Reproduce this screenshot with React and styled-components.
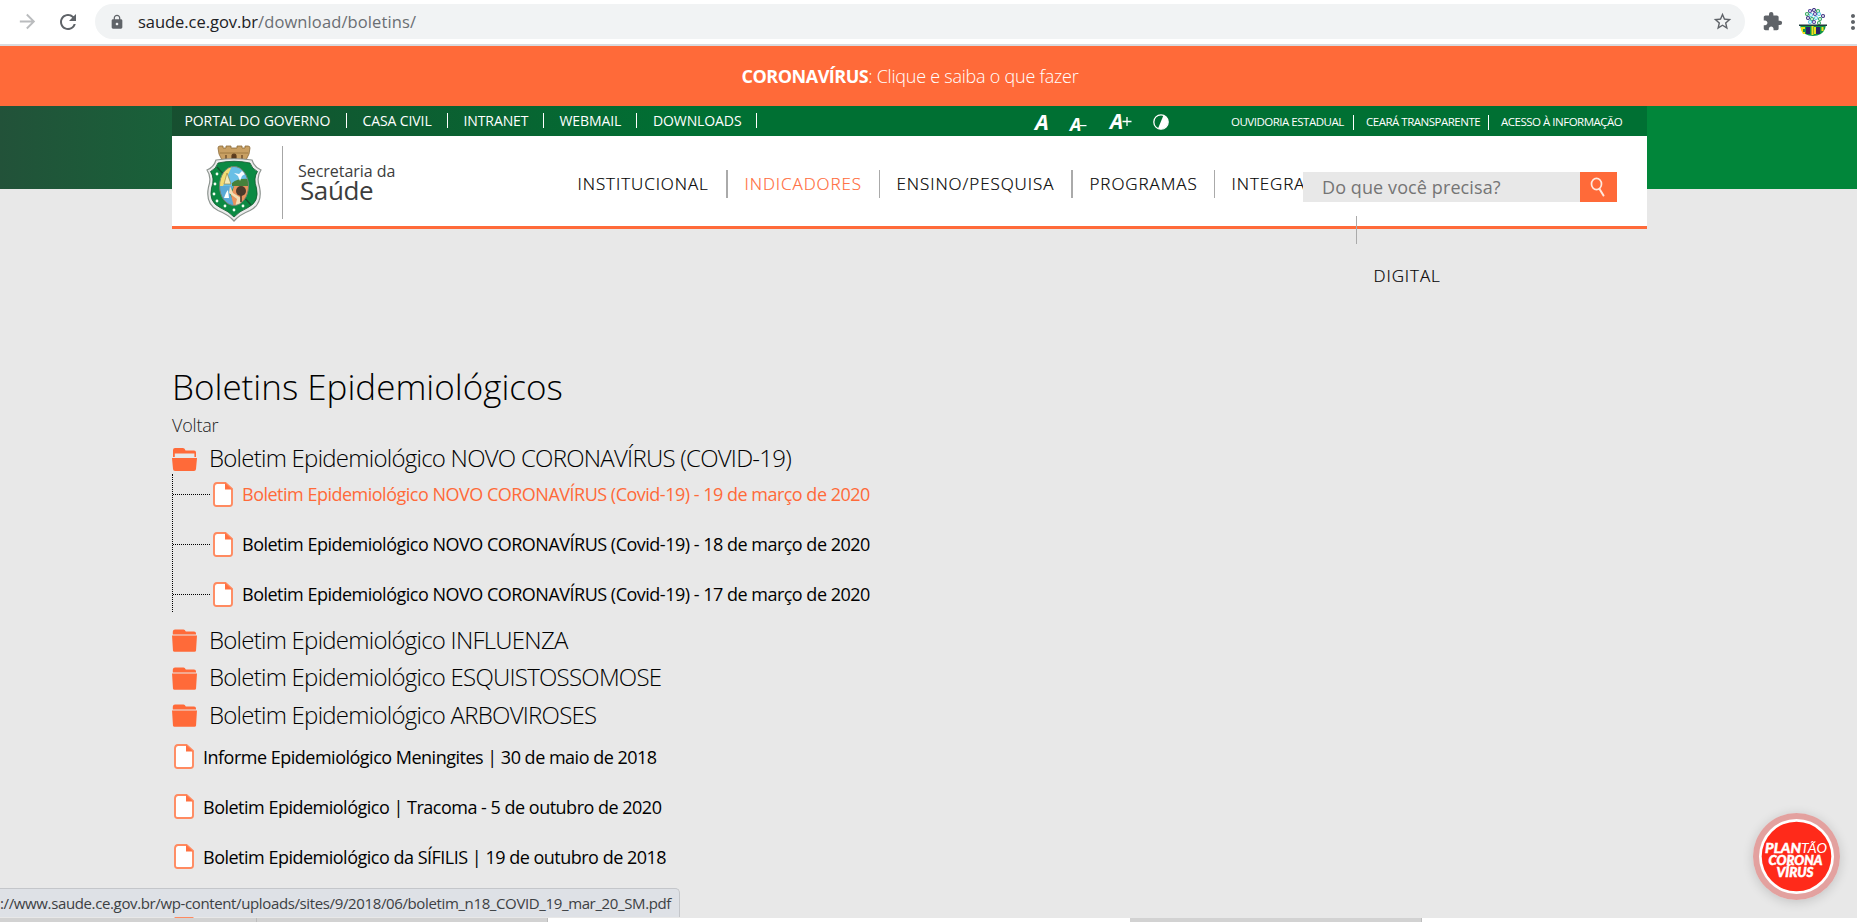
import React from 'react';
import styled, { createGlobalStyle, css } from 'styled-components';
import { MdArrowForward, MdRefresh, MdLock, MdStarBorder, MdExtension, MdMoreVert } from 'react-icons/md';

const ORANGE = '#ff6a39';

const GlobalStyle = createGlobalStyle`
  *, *::before, *::after { box-sizing: border-box; }
  body { margin: 0; background: #fff; font-family: "Open Sans", "Noto Sans", sans-serif; color: #000; }
  h1, h2, p, ul { margin: 0; padding: 0; }
  ul { list-style: none; }
  a { color: inherit; text-decoration: none; }
`;

const Screen = styled.div`
  width: 1857px;
  height: 922px;
  overflow: hidden;
  display: flex;
  flex-direction: column;
`;

/* ---- browser toolbar ---- */

const Toolbar = styled.header`
  flex: none;
  height: 46px;
  border-bottom: 2px solid #d9dbdf;
  display: flex;
  align-items: center;
  padding: 0 0 1px 16px;
  overflow: hidden;
`;

const ToolIcon = styled.span`
  flex: none;
  display: flex;
  color: ${(p) => p.$color || '#5f6368'};
  margin-left: ${(p) => p.$gap || 0}px;
  svg { display: block; }
`;

const AddressBar = styled.div`
  flex: none;
  width: 1650px;
  height: 35px;
  margin-left: 15px;
  padding: 0 12px 0 14px;
  border-radius: 18px;
  background: #f1f3f4;
  display: flex;
  align-items: center;
`;

const Url = styled.span`
  flex: 1;
  margin-left: 13px;
  font-size: 16.5px;
  line-height: 34px;
  letter-spacing: -0.04px;
  color: #202124;
`;

const UrlPath = styled.span`
  color: #6a6e73;
  letter-spacing: 0.11px;
`;

/* ---- page ---- */

const Page = styled.div`
  position: relative;
  flex: none;
  height: 872px;
  overflow: hidden;
  background: #e8e8e8;
`;

const Alert = styled.div`
  height: 60px;
  background: ${ORANGE};
  color: #fff;
  padding-right: 37px;
  text-align: center;
  font-size: 18px;
  font-weight: 300;
  line-height: 60px;
  letter-spacing: -0.24px;
  strong { font-weight: 700; letter-spacing: -0.5px; }
`;

const Masthead = styled.div`
  height: 83px;
  padding: 0 210px 0 172px;
  background: linear-gradient(90deg, #225239 0, #01863a 600px);
`;

const TopBar = styled.div`
  height: 30px;
  display: flex;
  align-items: flex-start;
  background: linear-gradient(90deg, #174f30 0, #007033 520px);
  color: #fff;
`;

const TopLinks = styled.ul`
  display: flex;
  padding-top: 7px;
  width: 863px;
`;

const TopLink = styled.li`
  width: ${(p) => p.$w}px;
  padding-left: ${(p) => p.$pl || 15.5}px;
  height: 15px;
  border-right: 1px solid #fff;
  font-size: 14px;
  line-height: 15px;
  letter-spacing: -0.1px;
  white-space: nowrap;
`;

const FontTools = styled.div`
  display: flex;
  align-items: flex-end;
  width: 196px;
  height: 25px;
  font-weight: 700;
  font-style: italic;
`;

const FontTool = styled.span`
  display: flex;
  width: ${(p) => p.$w}px;
  font-size: ${(p) => p.$size}px;
  line-height: 17px;
  height: ${(p) => p.$h}px;
`;

const Sign = styled.svg`
  margin: ${(p) => p.$top}px 0 0 -1px;
`;

const SideLinks = styled.ul`
  display: flex;
  padding-top: 9px;
`;

const SideLink = styled.li`
  width: ${(p) => p.$w}px;
  padding-left: ${(p) => (p.$first ? 0 : 12)}px;
  height: 15px;
  border-right: ${(p) => (p.$last ? 'none' : '1px solid #fff')};
  font-size: 11.5px;
  line-height: 14px;
  letter-spacing: -0.49px;
  white-space: nowrap;
`;

const Header = styled.div`
  position: relative;
  height: 93px;
  background: #fff;
  border-bottom: 3px solid ${ORANGE};
  display: flex;
  align-items: flex-start;
`;

const Brand = styled.div`
  display: flex;
  align-items: flex-start;
  width: 389px;
  padding: 9px 0 0 34px;
`;

const BrandName = styled.div`
  margin: 1px 0 0 20px;
  padding: 17px 0 0 15px;
  height: 73px;
  border-left: 1px solid #a6a6a6;
  color: #3d3d3d;
  span { display: block; font-size: 16px; line-height: 17px; letter-spacing: -0.03px; }
  strong { display: block; font-size: 26px; font-weight: 400; line-height: 20px; padding-left: 2px; letter-spacing: -0.4px; }
`;

const Nav = styled.ul`
  display: flex;
  align-items: flex-start;
  padding-top: 34px;
`;

const NavItem = styled.li`
  flex: none;
  width: ${(p) => p.$w}px;
  height: 28px;
  margin-top: ${(p) => p.$drop || 0}px;
  padding-left: 16.5px;
  border-right: ${(p) => (p.$rule ? `${p.$rule}px solid #aaa` : 'none')};
  font-size: 17px;
  font-weight: 300;
  line-height: 28px;
  letter-spacing: 0.93px;
  -webkit-text-stroke: 0.2px currentColor;
  color: ${(p) => (p.$active ? ORANGE : '#000')};
  white-space: nowrap;
`;

const NavLabel = styled.span`
  display: inline-block;
  ${(p) => p.$raised && css`margin-top: -46px; vertical-align: top;`}
`;

const Search = styled.form`
  position: absolute;
  left: 1131px;
  top: 36px;
  display: flex;
  width: 314px;
  height: 30px;
`;

const SearchField = styled.div`
  flex: 1;
  background: #e8e8e8;
  color: #757575;
  padding-left: 19px;
  font-size: 18px;
  line-height: 30px;
  letter-spacing: 0.1px;
`;

const SearchButton = styled.div`
  width: 37px;
  padding-right: 2px;
  background: ${ORANGE};
  display: flex;
  align-items: center;
  justify-content: center;
`;

const Content = styled.main`
  padding: 173px 210px 0 172px;
`;

const Title = styled.h1`
  font-size: 35px;
  font-weight: 300;
  line-height: 50px;
  letter-spacing: 0;
`;

const Back = styled.p`
  font-size: 18px;
  font-weight: 300;
  line-height: 27px;
  letter-spacing: -0.2px;
  color: #222;
`;

const FolderRow = styled.h2`
  display: flex;
  align-items: center;
  gap: 12px;
  height: ${(p) => (p.$open ? 30 : 37.5)}px;
  margin-top: ${(p) => (p.$open ? 5 : 0)}px;
  font-size: 24px;
  font-weight: 300;
  letter-spacing: -0.75px;
  white-space: nowrap;
`;

const FolderName = styled.span`
  padding-bottom: 3px;
`;

const Children = styled.ul`
  height: 138px;
  margin-bottom: 10px;
  padding-top: 1px;
  border-left: 1px dotted #000;
  display: flex;
  flex-direction: column;
  gap: 12px;
`;

const FileRow = styled.li`
  flex: none;
  display: flex;
  align-items: center;
  height: ${(p) => (p.$nested ? 38 : 44)}px;
  color: ${(p) => (p.$active ? ORANGE : '#000')};
  font-size: 18px;
  letter-spacing: -0.5px;
  white-space: nowrap;
  svg { margin: 0 9px 0 ${(p) => (p.$nested ? 3 : 2)}px; }
`;

const Branch = styled.span`
  width: 37px;
  border-top: 1px dotted #000;
`;

const Files = styled.ul`
  display: flex;
  flex-direction: column;
  gap: 6px;
`;

const StatusBar = styled.div`
  position: absolute;
  left: 0;
  bottom: 1px;
  width: 680px;
  height: 29px;
  padding-right: 10px;
  border: 1px solid #c4c6ca;
  border-width: 1px 1px 0 0;
  border-radius: 0 5px 0 0;
  background: #dee1e6;
  color: #3c4043;
  font-size: 15px;
  line-height: 28px;
  letter-spacing: -0.37px;
  text-align: right;
  white-space: nowrap;
`;

const HotlineBadge = styled.div`
  position: absolute;
  left: 1753px;
  top: 767px;
  width: 87px;
  height: 87px;
  border-radius: 50%;
  box-shadow: 0 2px 12px rgba(0, 0, 0, 0.16);
  svg { display: block; }
`;

const Taskbar = styled.div`
  flex: none;
  height: 4px;
  display: flex;
  background: #fff;
`;

const Task = styled.span`
  width: ${(p) => p.$w}px;
  margin-left: ${(p) => p.$gap || 0}px;
  background: #d2d2d2;
  border-right: 1px solid #bdbdbd;
`;

/* ---- drawings ---- */

const Crest = () => (
  <svg width="56" height="77" viewBox="0 0 56 77">
    <path d="M12 3q0-2 2-2h3v2h3V1h5v2h6V1h5v2h3V1h3q2 0 2 2l-1 6-3 6H16l-3-6z" fill="#c9a063" stroke="#8a6a38" strokeWidth=".8" />
    <path d="M14 8h28" stroke="#9a7740" strokeWidth=".9" />
    <path d="M20 14v-4M36 14v-4M26 14v-3a2 2 0 0 1 4 0v3" fill="#5b3b1e" stroke="#5b3b1e" strokeWidth="1.200" />
    <path d="M10 15Q28 12.500 46 15Q48 22 55 25Q50 32 53.500 42Q57 59 44 65.500Q33 70 28 76Q23 70 12 65.500Q-1 59 2.500 42Q6 32 1 25Q8 22 10 15z" fill="#ececec" stroke="#8d9490" strokeWidth="1.200" />
    <path d="M12 18Q28 14.500 44 18Q46 24 51.500 26.500Q47 33 50.500 43Q53.500 57 42 62.500Q33 66.500 28 72Q23 66.500 14 62.500Q2.500 57 5.500 43Q9 33 4.500 26.500Q10 24 12 18z" fill="#0b8a43" stroke="#10592f" strokeWidth=".8" />
    <path d="M11 22l34 38" stroke="#14532f" strokeWidth="1.400" />
    <clipPath id="oval"><ellipse cx="28" cy="41" rx="14.500" ry="19.500" /></clipPath>
    <g clipPath="url(#oval)">
      <rect x="13" y="21" width="30" height="20" fill="#68bfe6" />
      <path d="M13 21h13L17 41h-4z" fill="#f4dc73" />
      <path d="M26 38q6-5 17-4v7H26z" fill="#46813b" />
      <path d="M13 41h15l-4 8 6 12H13z" fill="#5aa9d6" />
      <path d="M28 41h15v21H28l-3-12z" fill="#e9935c" />
      <path d="M24 41l-1 7 8 6-2 8h5l1-9-8-5z" fill="#f2deb5" />
      <path d="M21 28l-3 11h7z" fill="#f3eaba" stroke="#927b32" strokeWidth=".6" />
      <path d="M28 28l5 1 3-3 3 3-3 2-2 5-2-5z" fill="#f6fbff" />
      <path d="M18 53q2-6 4-8l1 8z" fill="#fff" />
      <circle cx="35" cy="46" r="5" fill="#4c3a2b" />
      <path d="M35 48v9" stroke="#4c3a2b" strokeWidth="1.600" />
    </g>
    <ellipse cx="28" cy="41" rx="14.500" ry="19.500" fill="none" stroke="#75806f" strokeWidth="1" />
    <g fill="#f1fff2">
      {[[11, 29], [9, 39], [8, 49], [11, 56], [19, 61], [28, 65], [37, 61]].map(([x, y]) => (
        <circle key={`${x}-${y}`} cx={x} cy={y} r="1.400" />
      ))}
    </g>
  </svg>
);

const OpenFolder = () => (
  <svg width="25" height="23" viewBox="0 0 25 23">
    <path d="M1 9V2q0-2 2-2h8q2 0 2.500 2.500H22q2 0 2 2V9h-1.600V5.500H2.800V9z" fill={ORANGE} />
    <path d="M0 10h25l-1 11q-.2 2-2 2H3q-1.800 0-2-2z" fill={ORANGE} />
  </svg>
);

const ClosedFolder = () => (
  <svg width="25" height="23" viewBox="0 0 25 23">
    <path d="M.8 5.500V2.500Q1 .5 3 .5h8.500q1.500 0 2.300 2H22q2 0 2 2v1z" fill={ORANGE} />
    <path d="M0 6.500h25l-1 15q-.1 1.300-1.500 1.300h-20q-1.400 0-1.500-1.300z" fill={ORANGE} />
  </svg>
);

const FileIcon = () => (
  <svg width="20" height="25" viewBox="0 0 20 25">
    <path d="M4 1h8.500L19 7v14.500q0 2.500-2.500 2.500h-13Q1 24 1 21.500v-17Q1 1 4 1z" fill="#fff" stroke="#ff8a60" strokeWidth="1.900" />
    <path d="M12 1l7 6.500h-7z" fill="#ff7040" />
  </svg>
);

const Contrast = () => (
  <svg width="16" height="16" viewBox="0 0 16 16">
    <circle cx="8" cy="8" r="7.200" fill="none" stroke="#fff" strokeWidth="1.300" />
    <path d="M10.500 1.200A7.200 7.200 0 1 1 5 14.600z" fill="#fff" />
  </svg>
);

const Minus = () => (
  <Sign $top={9} width="7" height="2" viewBox="0 0 7 2"><path d="M0 .6h6.500" stroke="#fff" strokeWidth="1.200" /></Sign>
);

const Plus = () => (
  <Sign $top={4} width="10" height="10" viewBox="0 0 10 10"><path d="M.5 4.500h9M5 0v9" stroke="#fff" strokeWidth="1.300" /></Sign>
);

const Magnifier = () => (
  <svg width="16" height="20" viewBox="0 0 16 20">
    <ellipse cx="6.500" cy="7" rx="5" ry="5.700" fill="none" stroke="#ffe9df" strokeWidth="1.700" />
    <path d="M9.500 12l4 6.500" stroke="#ffe9df" strokeWidth="2" strokeLinecap="round" />
  </svg>
);

const Avatar = () => (
  <svg width="28" height="28" viewBox="0 0 28 28">
    {[
      [11, 3, '#4b3b97'], [15, 2, '#3a2f80'], [19, 3, '#2fa65a'], [8, 6, '#2fa65a'], [12, 7, '#59c8e0'],
      [16, 6, '#4b3b97'], [20, 6, '#59c8e0'], [24, 8, '#3a2f80'], [9, 10, '#3a2f80'], [13, 11, '#2fa65a'],
      [17, 10, '#59c8e0'], [21, 11, '#2fa65a'], [11, 14, '#59c8e0'], [15, 14, '#4b3b97'], [20, 15, '#2fa65a'],
    ].map(([x, y, c]) => (
      <circle key={`${x}-${y}`} cx={x} cy={y} r="1.500" fill="#fff" stroke={c} strokeWidth="1.100" />
    ))}
    <path d="M1 17h26l-1 4q-3 7-12 7T2 21z" fill="#129447" />
    <path d="M0 16.500h28v1.500H0z" fill="#1c3b3a" />
    <path d="M7 19h4v7H7zM17 19h4v7h-4z" fill="#2b2369" />
    <path d="M2 19h4v2H4v3h2v2H4l-2-4zM12.500 18h2v9h-2zM15 19h2v7h-2zM22.500 19h2v4h-2z" fill="#f2df1d" />
  </svg>
);

const Hotline = () => (
  <svg width="87" height="87" viewBox="0 0 87 87">
    <circle cx="43.500" cy="43.500" r="43.500" fill="#e3a19f" />
    <circle cx="43.500" cy="43.500" r="37.500" fill="#fff" />
    <circle cx="43.500" cy="43.500" r="34.800" fill="#ff2a1a" />
    <g fill="#fff" fontFamily="Lato, sans-serif" fontStyle="italic" fontWeight="900" fontSize="14">
      <text x="12" y="40" textLength="36" lengthAdjust="spacingAndGlyphs" stroke="#fff" strokeWidth=".4">PLAN</text>
      <text x="48" y="40" textLength="26" lengthAdjust="spacingAndGlyphs" fontWeight="400">TÃO</text>
      <text x="15.500" y="51.500" textLength="54" lengthAdjust="spacingAndGlyphs" stroke="#fff" strokeWidth=".5">CORONA</text>
      <text x="23.500" y="63.500" textLength="37" lengthAdjust="spacingAndGlyphs" stroke="#fff" strokeWidth=".5">VÍRUS</text>
    </g>
  </svg>
);

const nested = [
  'Boletim Epidemiológico NOVO CORONAVÍRUS (Covid-19) - 19 de março de 2020',
  'Boletim Epidemiológico NOVO CORONAVÍRUS (Covid-19) - 18 de março de 2020',
  'Boletim Epidemiológico NOVO CORONAVÍRUS (Covid-19) - 17 de março de 2020',
];
const folders = ['INFLUENZA', 'ESQUISTOSSOMOSE', 'ARBOVIROSES'];
const files = [
  'Informe Epidemiológico Meningites | 30 de maio de 2018',
  'Boletim Epidemiológico | Tracoma - 5 de outubro de 2020',
  'Boletim Epidemiológico da SÍFILIS | 19 de outubro de 2018',
];

export default function App() {
  return (
    <Screen>
      <GlobalStyle />
      <Toolbar>
        <ToolIcon $color="#babcbe"><MdArrowForward size={23} /></ToolIcon>
        <ToolIcon $gap={17}><MdRefresh size={24} /></ToolIcon>
        <AddressBar>
          <ToolIcon><MdLock size={16} /></ToolIcon>
          <Url>saude.ce.gov.br<UrlPath>/download/boletins/</UrlPath></Url>
          <ToolIcon><MdStarBorder size={21} /></ToolIcon>
        </AddressBar>
        <ToolIcon $gap={17}><MdExtension size={21} /></ToolIcon>
        <ToolIcon $gap={16}><Avatar /></ToolIcon>
        <ToolIcon $gap={14}><MdMoreVert size={24} /></ToolIcon>
      </Toolbar>

      <Page>
        <Alert><strong>CORONAVÍRUS</strong>: Clique e saiba o que fazer</Alert>
        <Masthead>
          <TopBar>
            <TopLinks>
              <TopLink $w={175} $pl={12.5}>PORTAL DO GOVERNO</TopLink>
              <TopLink $w={101}>CASA CIVIL</TopLink>
              <TopLink $w={96}>INTRANET</TopLink>
              <TopLink $w={93}>WEBMAIL</TopLink>
              <TopLink $w={120} $pl={16}>DOWNLOADS</TopLink>
            </TopLinks>
            <FontTools>
              <FontTool $w={35} $size={22} $h={18}>A</FontTool>
              <FontTool $w={40} $size={18} $h={15}>A<Minus /></FontTool>
              <FontTool $w={43} $size={21} $h={18}>A<Plus /></FontTool>
              <FontTool $w={16} $size={16} $h={17}><Contrast /></FontTool>
            </FontTools>
            <SideLinks>
              <SideLink $w={123} $first>OUVIDORIA ESTADUAL</SideLink>
              <SideLink $w={135}>CEARÁ TRANSPARENTE</SideLink>
              <SideLink $w={140} $last>ACESSO À INFORMAÇÃO</SideLink>
            </SideLinks>
          </TopBar>
          <Header>
            <Brand>
              <Crest />
              <BrandName><span>Secretaria da</span><strong>Saúde</strong></BrandName>
            </Brand>
            <Nav>
              <NavItem $w={167} $rule={2}>INSTITUCIONAL</NavItem>
              <NavItem $w={152} $rule={1} $active>INDICADORES</NavItem>
              <NavItem $w={193} $rule={2}>ENSINO/PESQUISA</NavItem>
              <NavItem $w={142} $rule={1}>PROGRAMAS</NavItem>
              <NavItem $w={142} $rule={1} $drop={46}><NavLabel $raised>INTEGRA</NavLabel></NavItem>
              <NavItem $w={90} $drop={92}>DIGITAL</NavItem>
            </Nav>
            <Search>
              <SearchField>Do que você precisa?</SearchField>
              <SearchButton><Magnifier /></SearchButton>
            </Search>
          </Header>
        </Masthead>

        <Content>
          <Title>Boletins Epidemiológicos</Title>
          <Back>Voltar</Back>
          <FolderRow $open>
            <OpenFolder />
            <FolderName>Boletim Epidemiológico NOVO CORONAVÍRUS (COVID-19)</FolderName>
          </FolderRow>
          <Children>
            {nested.map((name, i) => (
              <FileRow key={name} $nested $active={i === 0}><Branch /><FileIcon />{name}</FileRow>
            ))}
          </Children>
          {folders.map((name) => (
            <FolderRow key={name}>
              <ClosedFolder />
              <FolderName>Boletim Epidemiológico {name}</FolderName>
            </FolderRow>
          ))}
          <Files>
            {files.map((name) => (
              <FileRow key={name}><FileIcon />{name}</FileRow>
            ))}
            <FileRow><FileIcon /></FileRow>
          </Files>
        </Content>

        <StatusBar>://www.saude.ce.gov.br/wp-content/uploads/sites/9/2018/06/boletim_n18_COVID_19_mar_20_SM.pdf</StatusBar>
        <HotlineBadge><Hotline /></HotlineBadge>
      </Page>

      <Taskbar>
        <Task $w={257} />
        <Task $w={291} />
        <Task $w={292} $gap={582} />
      </Taskbar>
    </Screen>
  );
}
